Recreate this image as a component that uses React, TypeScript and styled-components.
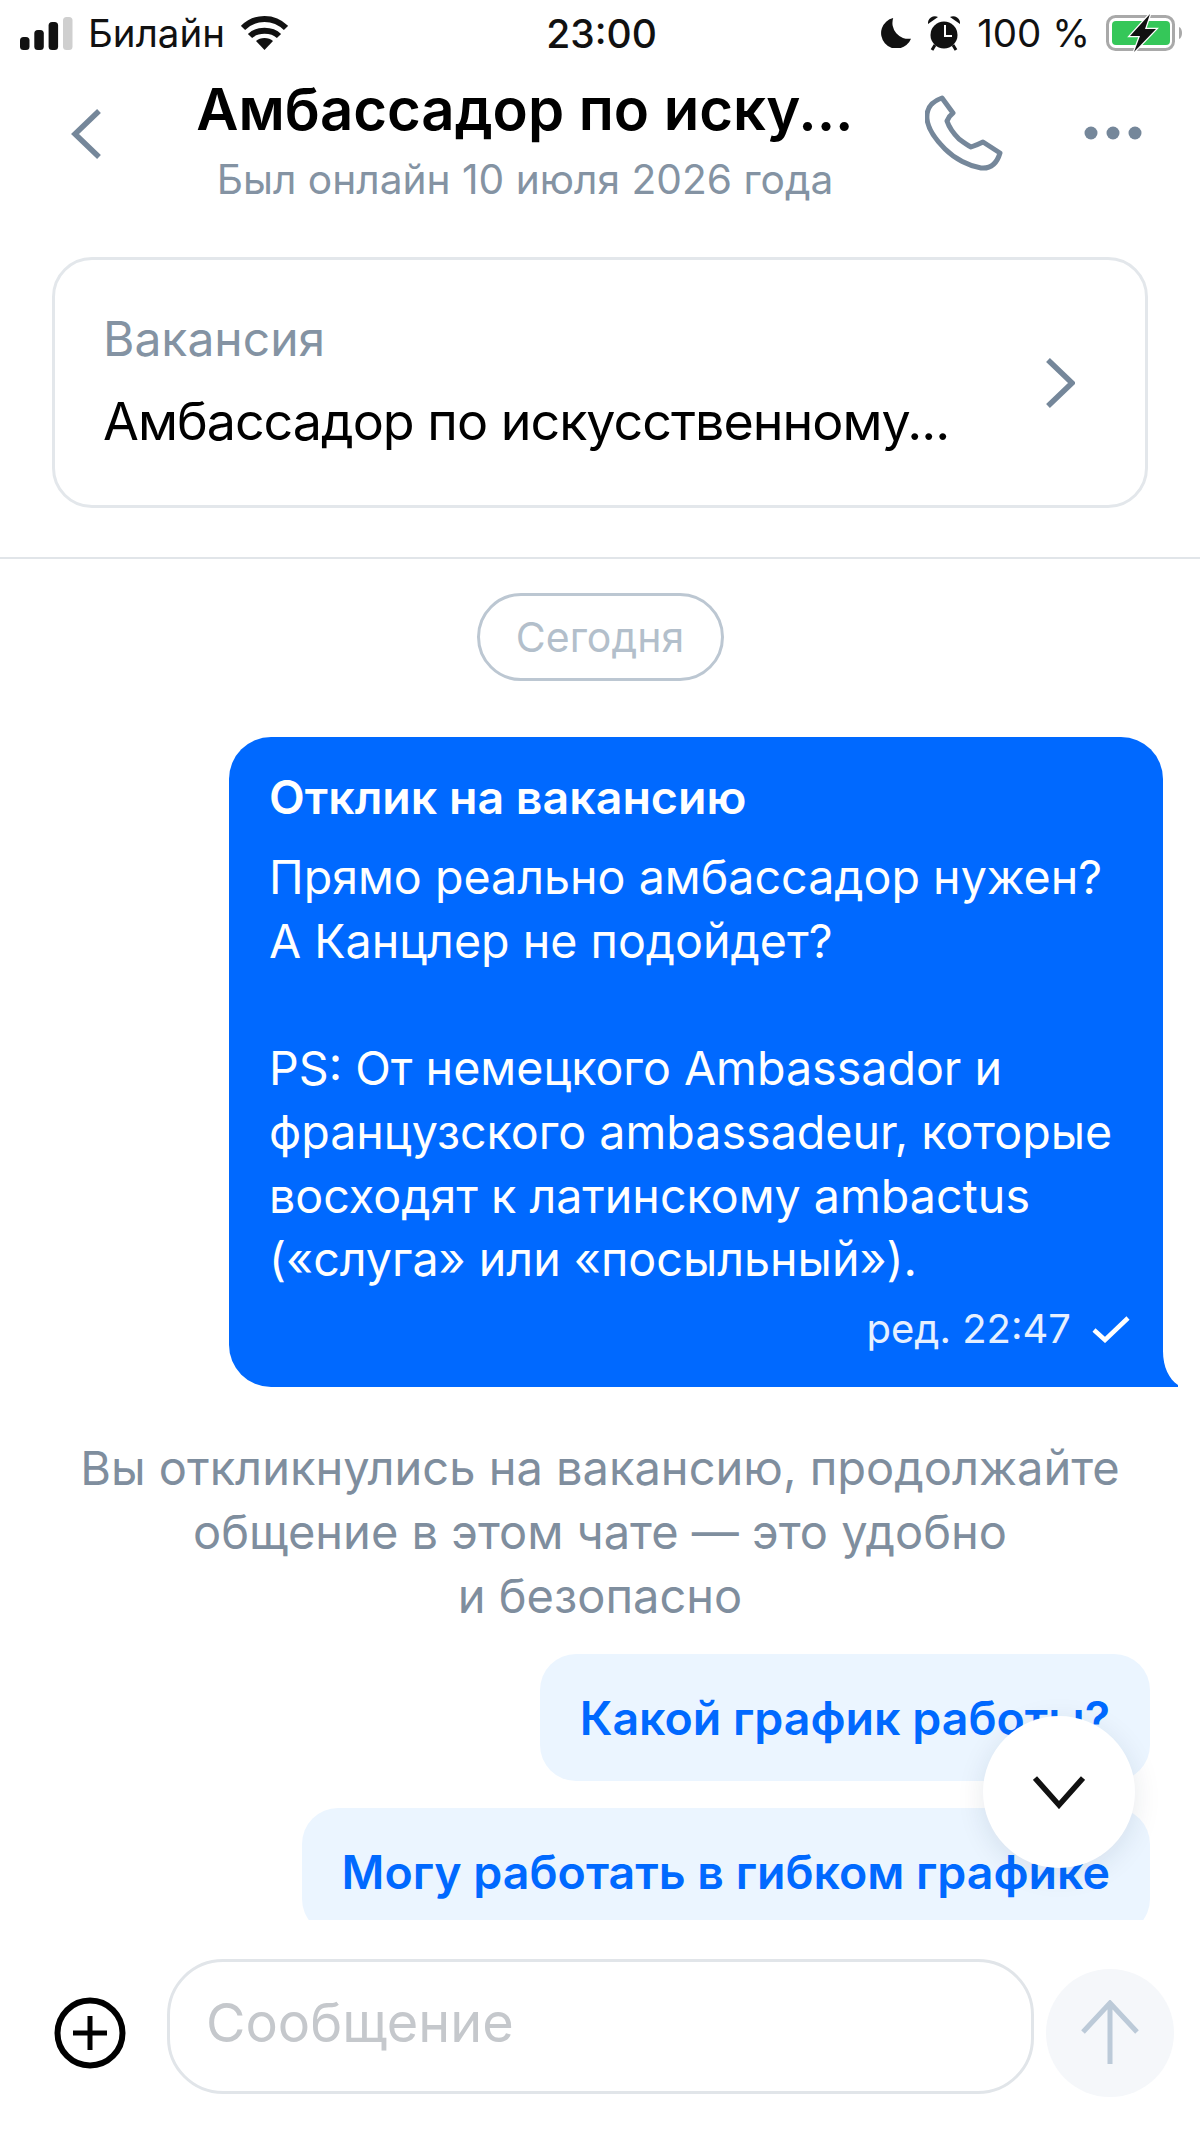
import styled, { createGlobalStyle } from 'styled-components'

const GlobalStyle = createGlobalStyle`
  html, body {
    margin: 0;
    padding: 0;
    background: #fff;
  }
  body {
    font-family: Inter, "Noto Sans", "Liberation Sans", sans-serif;
    -webkit-font-smoothing: antialiased;
  }
`

const Screen = styled.div`
  position: relative;
  width: 1200px;
  height: 2134px;
  overflow: hidden;
  background: #fff;
  display: flex;
  flex-direction: column;
`

const StatusBar = styled.div`
  height: 66px;
  padding: 0 17px 0 20px;
  display: grid;
  grid-template-columns: 1fr auto 1fr;
  align-items: center;
  color: #111;
  font-size: 38.5px;
  flex: none;
`

const StatusGroup = styled.div<{ $end?: boolean }>`
  display: flex;
  align-items: center;
  gap: 16px;
  justify-content: ${p => (p.$end ? 'flex-end' : 'flex-start')};
`

const Clock = styled.div`
  font-weight: 500;
  font-size: 39px;
`

const Header = styled.header`
  height: 160px;
  flex: none;
  display: grid;
  grid-template-columns: 130px 790px 1fr;
`

const BackCell = styled.div`
  padding: 43px 0 0 71px;
`

const HeaderTitles = styled.div`
  min-width: 0;
  padding-top: 11px;
  text-align: center;
`

const ChatTitle = styled.div`
  font-size: 58px;
  line-height: 64px;
  font-weight: 600;
  color: #000;
  white-space: nowrap;
`

const LastSeen = styled.div`
  font-size: 40.7px;
  line-height: 50px;
  color: #8493a3;
  white-space: nowrap;
  margin-top: 14px;
`

const HeaderActions = styled.div`
  display: flex;
  align-items: center;
  align-self: flex-start;
  gap: 81px;
  padding: 29px 0 0 5px;
`

const VacancyCard = styled.div`
  flex: none;
  height: 251px;
  box-sizing: border-box;
  margin: 31px 52px 0;
  padding: 0 70px 0 48px;
  border: 3px solid #e3e7eb;
  border-radius: 40px;
  display: flex;
  align-items: center;
  justify-content: space-between;
`

const VacancyLabel = styled.div`
  font-size: 48px;
  line-height: 54px;
  color: #8493a3;
`

const VacancyTitle = styled.div`
  font-size: 52px;
  line-height: 62px;
  letter-spacing: -1px;
  margin-top: 25px;
  color: #000;
  white-space: nowrap;
`

const Divider = styled.div`
  flex: none;
  height: 2px;
  margin-top: 49px;
  background: #e1e5e9;
`

const Feed = styled.div`
  flex: none;
  height: 1361px;
  overflow: hidden;
  display: flex;
  flex-direction: column;
  align-items: center;
`

const DatePill = styled.div`
  flex: none;
  margin-top: 34px;
  width: 247px;
  height: 88px;
  box-sizing: border-box;
  border: 3px solid #bcc7d2;
  border-radius: 44px;
  display: flex;
  align-items: center;
  justify-content: center;
  font-size: 41px;
  color: #b3bfcb;
`

const OutgoingBubble = styled.div`
  position: relative;
  flex: none;
  align-self: flex-end;
  box-sizing: border-box;
  width: 934px;
  height: 650px;
  margin: 56px 37px 0 0;
  padding: 34px 33px 0 40px;
  background: #0069ff;
  border-radius: 42px 42px 0 42px;
  color: #fff;

  &::after {
    content: '';
    position: absolute;
    right: -15px;
    bottom: 0;
    width: 15px;
    height: 36px;
    background: #0069ff;
    clip-path: path('M0 0 C0 16 6 28 15 34 L15 36 H0 Z');
  }
`

const BubbleHeading = styled.div`
  font-size: 46.5px;
  line-height: 52px;
  font-weight: 600;
`

const BubbleText = styled.div`
  margin-top: 23px;
  font-size: 46.6px;
  line-height: 63.7px;
  white-space: pre-line;
`

const BubbleMeta = styled.div`
  display: flex;
  align-items: center;
  justify-content: flex-end;
  gap: 21px;
  margin-top: 13px;
  font-size: 40px;
  line-height: 48px;
  color: #e6f0ff;
`

const Notice = styled.div`
  flex: none;
  margin-top: 49px;
  text-align: center;
  font-size: 47px;
  line-height: 64px;
  color: #7f8e9e;
  white-space: nowrap;
`

const QuickReply = styled.div<{ $gap: number }>`
  align-self: flex-end;
  flex: none;
  margin: ${p => p.$gap}px 50px 0 0;
  height: 127px;
  padding: 0 40px;
  display: flex;
  align-items: center;
  background: #ebf5ff;
  border-radius: 36px;
  font-size: 46.5px;
  font-weight: 600;
  color: #0069ff;
  white-space: nowrap;
`

const Composer = styled.div`
  flex: none;
  display: flex;
  align-items: flex-start;
  margin-top: 39px;
  padding-left: 54px;
`

const AddButton = styled.div`
  flex: none;
  display: flex;
  margin-top: 38px;
`

const MessageInput = styled.div`
  flex: none;
  width: 867px;
  height: 135px;
  box-sizing: border-box;
  margin-left: 41px;
  padding: 0 0 8px 36px;
  border: 3px solid #e1e5e9;
  border-radius: 56px;
  display: flex;
  align-items: center;
  font-size: 54px;
  color: #c5c8cc;
`

const SendButton = styled.div`
  flex: none;
  width: 128px;
  height: 128px;
  margin: 10px 0 0 12px;
  border-radius: 50%;
  background: #f5f7fa;
  display: flex;
  align-items: center;
  justify-content: center;
`

const ScrollDown = styled.div`
  position: absolute;
  left: 983px;
  top: 1716px;
  width: 152px;
  height: 152px;
  border-radius: 50%;
  background: #fff;
  box-shadow: 0 6px 28px rgba(20, 40, 70, 0.1);
  display: flex;
  align-items: center;
  justify-content: center;
`

function SignalBars() {
  return (
    <svg width="54" height="33" viewBox="0 0 54 33" style={{ marginRight: -2 }}>
      <rect x="0" y="20" width="9.5" height="13" rx="3.5" fill="#111" />
      <rect x="14.3" y="13" width="9.5" height="20" rx="3.5" fill="#111" />
      <rect x="28.6" y="5" width="9.5" height="28" rx="3.5" fill="#111" />
      <rect x="43" y="0" width="9.5" height="33" rx="3.5" fill="#cfcfcf" />
    </svg>
  )
}

function WifiMark() {
  return (
    <svg width="47" height="34" viewBox="0 0 47 34" fill="none" stroke="#111" strokeWidth="6">
      <path d="M2 12 C14 0 33 0 45 12" />
      <path d="M9 20 C16 13 31 13 38 20" />
      <path d="M23.5 34 L15 25 C19 21 28 21 32 25 Z" fill="#111" stroke="none" />
    </svg>
  )
}

function MoonMark() {
  return (
    <svg width="30" height="30" viewBox="0 0 32 32">
      <path d="M13 0 A16.5 16.5 0 1 0 32 22 A17 17 0 0 1 13 0 Z" fill="#111" />
    </svg>
  )
}

function AlarmMark() {
  return (
    <svg width="34" height="36" viewBox="0 0 34 36" fill="none">
      <circle cx="17" cy="20" r="13.5" fill="#111" />
      <path d="M18 10 V21 H25" stroke="#fff" strokeWidth="2" />
      <path d="M1 9 A7 7 0 0 1 11 2 Z M33 9 A7 7 0 0 0 23 2 Z" fill="#111" />
      <path d="M8 30 L5 35 M26 30 L29 35" stroke="#111" strokeWidth="3" />
    </svg>
  )
}

function BatteryMark() {
  return (
    <svg width="77" height="38" viewBox="0 0 77 38" fill="none">
      <rect x="1.5" y="2.5" width="66" height="33" rx="8" stroke="#a9a9a9" strokeWidth="3" />
      <rect x="6" y="7" width="58" height="24" rx="4" fill="#35c759" />
      <path d="M73 13 C77 14 77 24 73 25 Z" fill="#a9a9a9" />
      <path d="M44 0 L24 22 H34 L28 38 L50 15 H39 Z" fill="#111" stroke="#fff" strokeWidth="2.5" paintOrder="stroke" />
    </svg>
  )
}

function BackChevron() {
  return (
    <svg width="31" height="50" viewBox="0 0 31 50" fill="none" stroke="#75879a" strokeWidth="5.5">
      <path d="M28 2 L4 25 L28 48" />
    </svg>
  )
}

function ForwardChevron() {
  return (
    <svg width="30" height="50" viewBox="0 0 30 50" fill="none" stroke="#75879a" strokeWidth="5.5">
      <path d="M3 2 L27 25 L3 48" />
    </svg>
  )
}

function DownChevron() {
  return (
    <svg width="52" height="34" viewBox="0 0 52 34" fill="none" stroke="#111" strokeWidth="5.5">
      <path d="M2 3 L26 30 L50 3" />
    </svg>
  )
}

function PhoneMark() {
  return (
    <svg width="78" height="76" viewBox="0 0 78 76" fill="none" stroke="#75879a" strokeWidth="5" strokeLinejoin="round">
      <path d="M17 3 L28 18 Q24 21 22 26 C24 32 30 40 34 44 C38 47 42 50 46 52 Q52 50 58 47 L75 58 C72 68 66 74 56 73 C44 71 30 64 20 54 C10 44 3 34 2 24 C1 12 8 6 17 3 Z" />
    </svg>
  )
}

function DotsMark() {
  return (
    <svg width="58" height="14" viewBox="0 0 58 14" fill="#75879a">
      <circle cx="7" cy="7" r="6.5" />
      <circle cx="29" cy="7" r="6.5" />
      <circle cx="51" cy="7" r="6.5" />
    </svg>
  )
}

function PlusCircle() {
  return (
    <svg width="72" height="72" viewBox="0 0 72 72" fill="none" stroke="#000">
      <circle cx="36" cy="36" r="32.5" strokeWidth="6" />
      <path d="M36 19 V53 M19 36 H53" strokeWidth="5" />
    </svg>
  )
}

function ArrowUp() {
  return (
    <svg width="60" height="66" viewBox="0 0 60 66" fill="none" stroke="#bccad8" strokeWidth="5">
      <path d="M30 3 V64 M3 32 L30 3 L57 32" />
    </svg>
  )
}

function SentCheck() {
  return (
    <svg width="38" height="28" viewBox="0 0 38 28" fill="none" stroke="#fff" strokeWidth="4.5">
      <path d="M2 15 L13 25 L36 3" />
    </svg>
  )
}

export default function App() {
  return (
    <Screen>
      <GlobalStyle />
      <StatusBar>
        <StatusGroup>
          <SignalBars />
          <span>Билайн</span>
          <WifiMark />
        </StatusGroup>
        <Clock>23:00</Clock>
        <StatusGroup $end>
          <MoonMark />
          <AlarmMark />
          <span>100 %</span>
          <BatteryMark />
        </StatusGroup>
      </StatusBar>

      <Header>
        <BackCell>
          <BackChevron />
        </BackCell>
        <HeaderTitles>
          <ChatTitle>Амбассадор по иску...</ChatTitle>
          <LastSeen>Был онлайн 10 июля 2026 года</LastSeen>
        </HeaderTitles>
        <HeaderActions>
          <PhoneMark />
          <DotsMark />
        </HeaderActions>
      </Header>

      <VacancyCard>
        <div>
          <VacancyLabel>Вакансия</VacancyLabel>
          <VacancyTitle>Амбассадор по искусственному...</VacancyTitle>
        </div>
        <ForwardChevron />
      </VacancyCard>
      <Divider />

      <Feed>
        <DatePill>Сегодня</DatePill>
        <OutgoingBubble>
          <BubbleHeading>Отклик на вакансию</BubbleHeading>
          <BubbleText>
            {`Прямо реально амбассадор нужен?
А Канцлер не подойдет?

PS: От немецкого Ambassador и
французского ambassadeur, которые
восходят к латинскому ambactus
(«слуга» или «посыльный»).`}
          </BubbleText>
          <BubbleMeta>
            <span>ред. 22:47</span>
            <SentCheck />
          </BubbleMeta>
        </OutgoingBubble>
        <Notice>
          Вы откликнулись на вакансию, продолжайте
          <br />
          общение в этом чате — это удобно
          <br />и безопасно
        </Notice>
        <QuickReply $gap={26}>Какой график работы?</QuickReply>
        <QuickReply $gap={27}>Могу работать в гибком графике</QuickReply>
      </Feed>

      <Composer>
        <AddButton>
          <PlusCircle />
        </AddButton>
        <MessageInput>Сообщение</MessageInput>
        <SendButton>
          <ArrowUp />
        </SendButton>
      </Composer>

      <ScrollDown>
        <DownChevron />
      </ScrollDown>
    </Screen>
  )
}
